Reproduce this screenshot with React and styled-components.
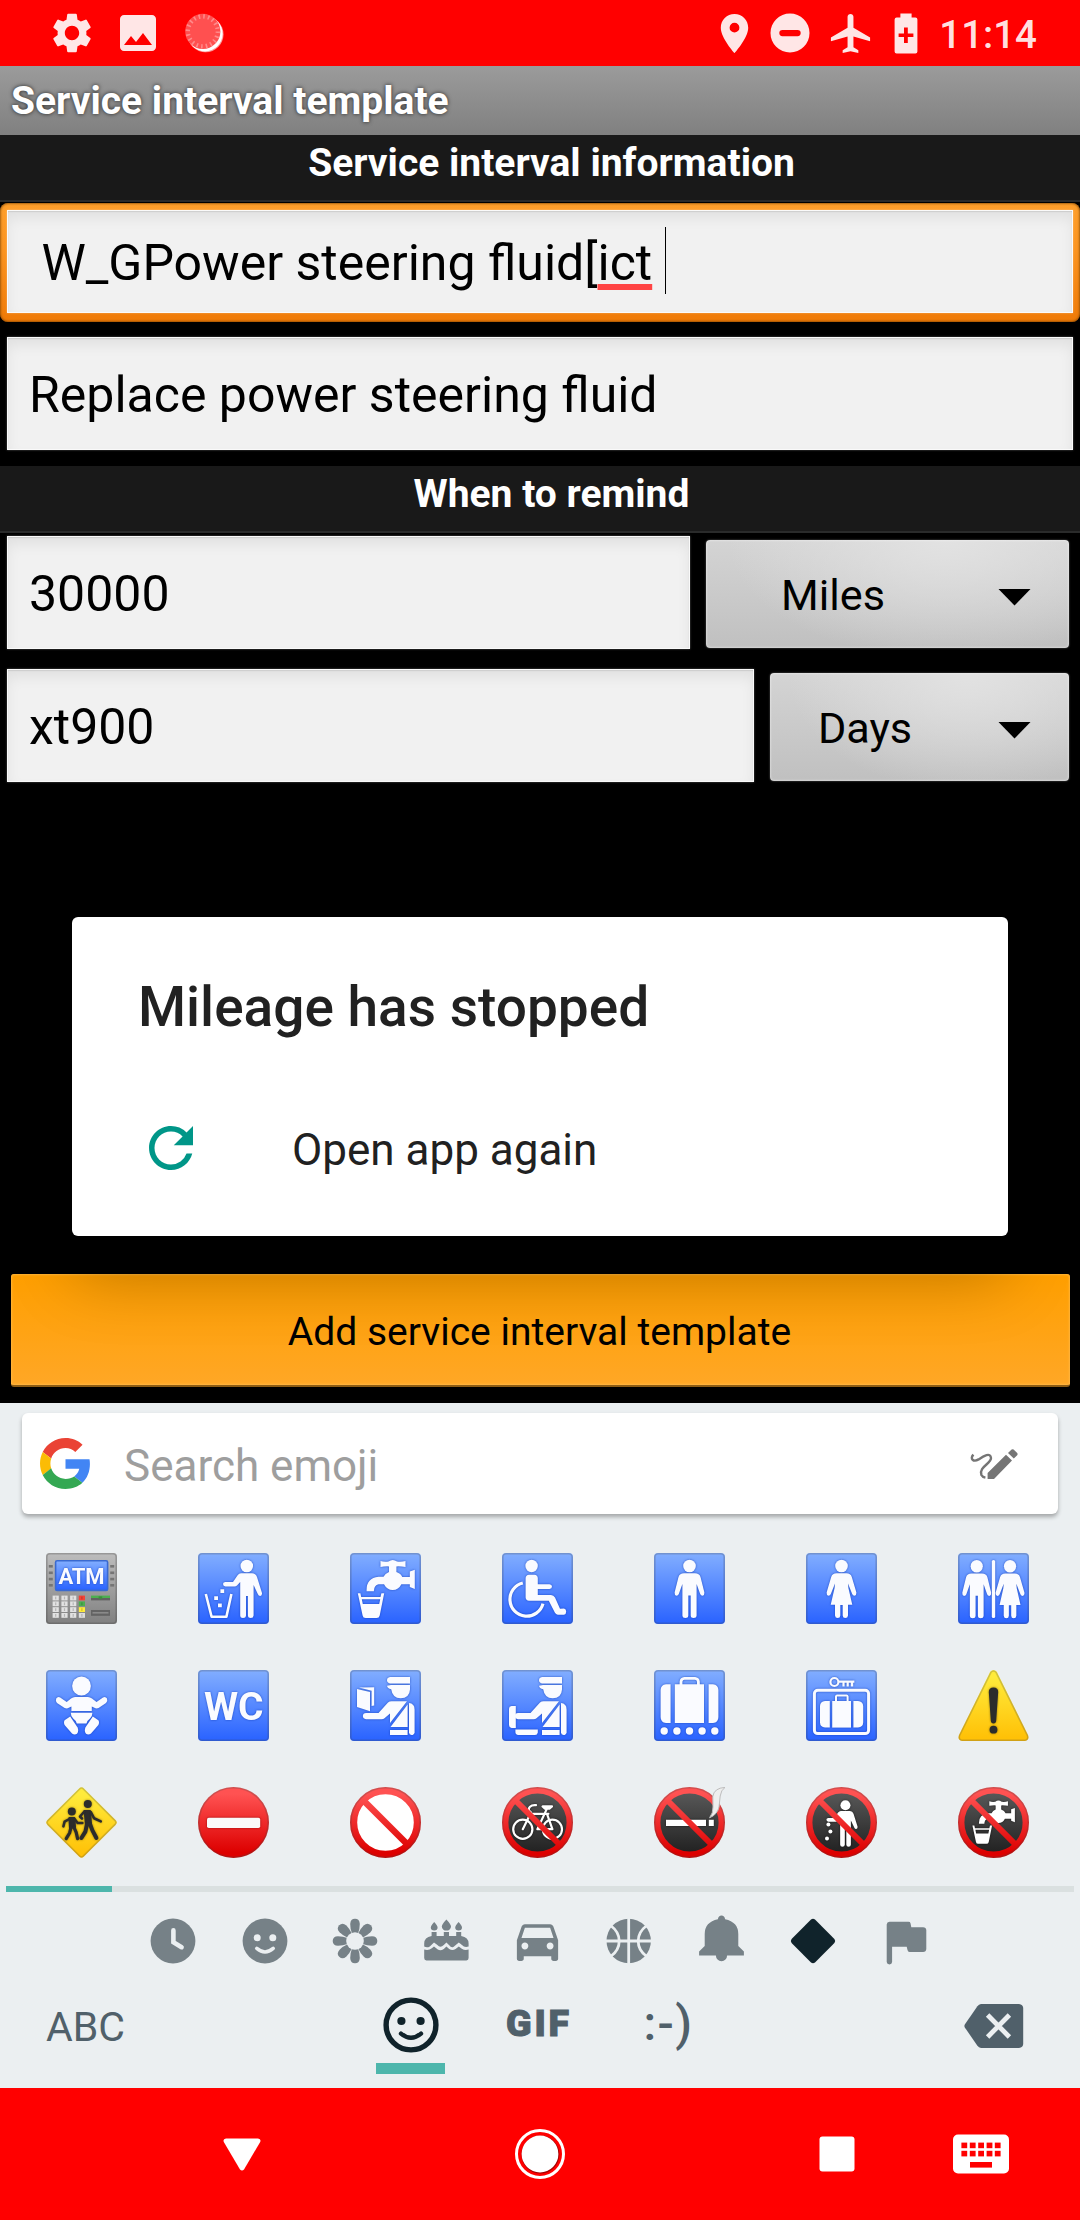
import React from 'react';
import styled, { createGlobalStyle, css } from 'styled-components';
import {
  MdSettings,
  MdImage,
  MdLocationOn,
  MdAirplanemodeActive,
  MdRefresh,
  MdDirectionsCar,
} from 'react-icons/md';

const GlobalStyle = createGlobalStyle`
  html, body { margin: 0; padding: 0; background: #000; }
  *, *::before, *::after { box-sizing: border-box; }
  svg { display: block; flex: none; }
`;

/* ---------- frame ---------- */

const Phone = styled.div`
  position: relative;
  width: 1080px;
  height: 2220px;
  display: flex;
  flex-direction: column;
  overflow: hidden;
  background: #000;
  color: #000;
  font-family: Roboto, sans-serif;
`;

const StatusBar = styled.header`
  height: 66px;
  flex: none;
  display: flex;
  justify-content: space-between;
  align-items: center;
  padding: 0 43px 0 48px;
  background: #ff0000;
  color: rgba(255, 255, 255, 0.9);
`;

const StatusGroup = styled.div`
  display: flex;
  align-items: center;
  gap: 18px;
`;

const StatusIcon = styled.span`
  margin: 0 ${(p) => p.$right || 0}px 0 ${(p) => p.$left || 0}px;
`;

const Clock = styled.span`
  font-size: 38.5px;
  line-height: 46px;
  font-weight: 500;
  margin-left: 3px;
  padding-top: 3px;
`;

const TitleBar = styled.div`
  height: 69px;
  flex: none;
  display: flex;
  align-items: center;
  padding-left: 11px;
  background: linear-gradient(#9b9b9b, #808080);
  color: #fff;
  font-size: 39px;
  font-weight: 700;
  text-shadow: 0 0 4px rgba(0, 0, 0, 0.75);
`;

/* ---------- form ---------- */

const Form = styled.main`
  height: 1268px;
  flex: none;
  display: flex;
  flex-direction: column;
`;

const SectionHeader = styled.h2`
  height: 67px;
  flex: none;
  margin: ${(p) => p.$top || 0}px 0 0;
  padding: 0 0 9px 23px;
  display: flex;
  align-items: center;
  justify-content: center;
  background: #191919;
  border-bottom: 2px solid #2a2b2b;
  color: #fff;
  font-size: 39px;
  font-weight: 700;
`;

const fieldFace = css`
  background: #f1f1f1;
  box-shadow: inset 0 0 0 1px #fafafa, inset 0 8px 14px rgba(0, 0, 0, 0.07),
    inset 0 1px 2px rgba(0, 0, 0, 0.35), 0 0 2px rgba(255, 255, 255, 0.35);
`;

const Field = styled.div`
  ${fieldFace}
  height: 113px;
  flex: none;
  width: ${(p) => p.$width}px;
  display: flex;
  align-items: center;
  padding: 3px 0 0 22px;
  font-size: 50px;
  line-height: 58px;
  white-space: pre;
`;

const FocusRing = styled.div`
  height: 119px;
  margin-top: 1px;
  flex: none;
  padding: 7px 7px 9px;
  border-radius: 8px;
  background: linear-gradient(#fe9f2b, #fb9420 40%, #ef7a07);
  box-shadow: inset 0 0 2px 1px rgba(110, 60, 0, 0.6);
`;

const FocusedField = styled(Field)`
  width: 100%;
  height: 100%;
  padding-top: 3px;
`;

const Typo = styled.span`
  text-decoration: underline #ff4444 5.5px;
  text-decoration-skip-ink: none;
  text-underline-offset: 3.5px;
`;

const Caret = styled.i`
  width: 1px;
  height: 67px;
  margin-top: -5px;
  background: #000;
`;

const FormRow = styled.div`
  display: flex;
  flex: none;
  margin-top: ${(p) => p.$top}px;
  padding: 0 11px 0 7px;
  justify-content: space-between;
  align-items: flex-end;
`;

const Stack = styled.div`
  flex: none;
  padding: 0 7px;
  margin-top: 15px;
`;

const Spinner = styled.div`
  width: ${(p) => p.$width}px;
  height: 108px;
  margin-bottom: 1px;
  display: flex;
  align-items: center;
  border-radius: 4px;
  background: radial-gradient(ellipse 60% 110% at 66% 0, #e2e2e2, rgba(226, 226, 226, 0)),
    linear-gradient(#d4d4d4, #c0c0c0);
  box-shadow: inset 0 0 2px 1px rgba(255, 255, 255, 0.35), 0 0 2px rgba(255, 255, 255, 0.4);
`;

const SpinnerLabel = styled.span`
  flex: 1;
  padding-top: 3px;
  text-align: center;
  font-size: 43.2px;
  line-height: 52px;
`;

const Arrow = styled.i`
  width: 33px;
  height: 17px;
  margin: 6px 38px 0 38px;
  background: #000;
  clip-path: polygon(0 0, 100% 0, 50% 100%);
`;

const SubmitButton = styled.button`
  height: 113px;
  flex: none;
  margin: auto 10px 16px 11px;
  padding: 5px 2px 0 0;
  border: 0;
  border-radius: 3px;
  border-bottom: 2px solid #8c5c14;
  background: linear-gradient(#ff9f00, #ffa726);
  box-shadow: inset 0 0 2px 1px rgba(255, 190, 80, 0.7);
  color: #000;
  font: 400 39px/46px Roboto, sans-serif;
`;

/* ---------- crash dialog ---------- */

const Dialog = styled.section`
  position: absolute;
  left: 72px;
  top: 917px;
  width: 936px;
  height: 319px;
  padding: 58px 66px 0;
  border-radius: 6px;
  background: #fff;
  box-shadow: 0 42px 66px -2px rgba(0, 0, 0, 0.26);
  color: #212121;
`;

const DialogTitle = styled.h1`
  margin: 0;
  font-size: 55px;
  line-height: 64px;
  font-weight: 500;
`;

const DialogAction = styled.div`
  display: flex;
  align-items: center;
  margin-top: 76px;
  gap: 88px;
  font-size: 44px;
  line-height: 52px;
  svg { color: #009688; }
  span { padding-top: 4px; }
`;

/* ---------- keyboard ---------- */

const Keyboard = styled.section`
  height: 685px;
  flex: none;
  display: flex;
  flex-direction: column;
  background: #ebeff1;
`;

const SearchCard = styled.div`
  height: 101px;
  flex: none;
  margin: 10px 22px 0;
  padding: 0 40px 0 18px;
  display: flex;
  align-items: center;
  border-radius: 6px;
  background: #fff;
  box-shadow: 0 3px 4px rgba(0, 0, 0, 0.3);
  color: #9e9e9e;
  font-size: 44px;
  span { flex: 1; padding: 5px 0 0 33px; }
`;

const EmojiGrid = styled.div`
  display: grid;
  grid-template-columns: repeat(7, 152px);
  grid-auto-rows: 117px;
  place-items: center;
  margin: 16px 0 0 5.5px;
`;

const Scroll = styled.div`
  height: 6px;
  flex: none;
  margin: 5px 6px 0;
  background: #dae0e0;
`;

const ScrollThumb = styled.div`
  width: 106px;
  height: 6px;
  background: #4db6ac;
`;

const Categories = styled.div`
  display: flex;
  flex: none;
  height: 54px;
  margin: 22px 0 0 127.8px;
`;

const Category = styled.div`
  width: 91.4px;
  display: flex;
  justify-content: center;
  align-items: center;
  color: ${(p) => (p.$active ? '#10232b' : '#768187')};
  transform: translate(${(p) => p.$nudge || 0}px, ${(p) => p.$lift || 0}px);
`;

const ModeRow = styled.div`
  display: flex;
  flex: none;
  height: 77px;
  margin-top: 29px;
  padding: 0 56px 0 46px;
  color: #50606a;
`;

const AbcKey = styled.div`
  width: 330px;
  padding-top: 6px;
  font-size: 41px;
  line-height: 48px;
`;

const ModeTab = styled.div`
  width: 69px;
  margin-right: ${(p) => p.$gap || 0}px;
  display: flex;
  flex-direction: column;
  align-items: center;
  justify-content: space-between;
  color: ${(p) => (p.$active ? '#10232b' : 'inherit')};
`;

const TabBar = styled.i`
  width: 69px;
  height: 11px;
  background: #4db6ac;
`;

const GifLabel = styled.b`
  font-size: 37.5px;
  line-height: 44px;
  font-weight: 900;
  letter-spacing: 2.8px;
  padding: 4px 0 0 3px;
  -webkit-text-stroke: 1px currentColor;
`;

const SmileLabel = styled.span`
  font-size: 48px;
  line-height: 54px;
  font-weight: 500;
  letter-spacing: 1.4px;
  padding-left: 6px;
`;

const DeleteKey = styled.div`
  margin-left: auto;
  padding-top: 5.5px;
`;

/* ---------- navigation ---------- */

const NavBar = styled.nav`
  height: 132px;
  flex: none;
  display: grid;
  grid-template-columns: 484px 112px 483px 1px;
  align-items: center;
  background: #ff0000;
`;

const NavItem = styled.div`
  display: flex;
  align-items: center;
  justify-content: ${(p) => p.$align || 'center'};
  gap: 98px;
  padding-right: ${(p) => p.$right || 0}px;
  color: #fff;
`;

/* ---------- pictograms ---------- */

const WHITE = '#fafbff';

const Pictogram = styled.g`
  filter: drop-shadow(0 0 1px ${(p) => p.$glow || 'rgba(10, 50, 170, 0.7)'});
`;

const TileText = styled.text`
  font-family: Roboto, sans-serif;
  font-weight: 700;
  font-size: ${(p) => p.$size}px;
  fill: ${WHITE};
  text-anchor: middle;
`;

const HiddenDefs = styled.svg`
  position: absolute;
`;

const Defs = () => (
  <HiddenDefs width="0" height="0">
    <defs>
      <linearGradient id="blue" x1="0" y1="0" x2="0" y2="1">
        <stop offset="0" stopColor="#82aeff" />
        <stop offset="1" stopColor="#2962ff" />
      </linearGradient>
      <linearGradient id="red" x1="0" y1="0" x2="0" y2="71" gradientUnits="userSpaceOnUse">
        <stop offset="0.1" stopColor="#ff5252" />
        <stop offset="0.92" stopColor="#dd0000" />
      </linearGradient>
      <linearGradient id="yellow" x1="0" y1="0" x2="0" y2="1">
        <stop offset="0.1" stopColor="#ffeb3b" />
        <stop offset="0.95" stopColor="#ffc107" />
      </linearGradient>
      <linearGradient id="dark" x1="0" y1="0" x2="0" y2="1">
        <stop offset="0" stopColor="#5a5a5a" />
        <stop offset="1" stopColor="#202020" />
      </linearGradient>
      <linearGradient id="grey" x1="0" y1="0" x2="0" y2="1">
        <stop offset="0" stopColor="#bdbdbd" />
        <stop offset="1" stopColor="#808080" />
      </linearGradient>
    </defs>
  </HiddenDefs>
);

const Emoji = ({ children }) => (
  <svg width="71" height="71" viewBox="0 0 71 71">{children}</svg>
);

const BlueTile = ({ children }) => (
  <Emoji>
    <rect width="71" height="71" rx="4" fill="url(#blue)" />
    <rect x="0.8" y="0.8" width="69.4" height="69.4" rx="3.4" fill="none" stroke="#424242" strokeOpacity="0.25" strokeWidth="1.6" />
    <Pictogram fill={WHITE}>{children}</Pictogram>
  </Emoji>
);

const Banned = ({ children, over }) => (
  <Emoji>
    <circle cx="35.5" cy="35.5" r="32" fill="url(#dark)" />
    <Pictogram fill="#fff" $glow="rgba(0, 0, 0, 0.6)">{children}</Pictogram>
    <circle cx="35.5" cy="35.5" r="32.3" fill="none" stroke="url(#red)" strokeWidth="6.4" />
    <path d="M13.5 13.5L57.5 57.5" stroke="url(#red)" strokeWidth="6" />
    <circle cx="35.5" cy="35.5" r="34.8" fill="none" stroke="#424242" strokeOpacity="0.25" strokeWidth="1.4" />
    {over}
  </Emoji>
);

const Man = () => (
  <>
    <circle cx="35.5" cy="13" r="6.3" />
    <path d="M30 20.3H41Q45.3 20.3 46.5 24L50.4 39.6Q50.6 42.4 48.6 42.8Q46.8 42.8 46.2 41L42.6 31V62.5Q42.4 65 39.6 65Q36.8 65 36.7 62.5V42.5H34.3V62.5Q34.2 65 31.4 65Q28.6 65 28.4 62.5V31L24.8 41Q24.2 42.8 22.4 42.8Q20.4 42.4 20.6 39.6L24.5 24Q25.7 20.3 30 20.3Z" />
  </>
);

const Woman = () => (
  <>
    <circle cx="35.5" cy="13" r="6.3" />
    <path d="M30.5 20.3H40.5Q44.6 20.3 45.8 24L50.4 39.6Q50.6 42.4 48.6 42.8Q46.8 42.8 46.2 41L42 30.5L42.4 35L46.3 51.8H42V62.5Q41.8 65 39.3 65Q36.8 65 36.7 62.5V52H34.3V62.5Q34.2 65 31.7 65Q29.2 65 29 62.5V51.8H24.7L28.6 35L29 30.5L24.8 41Q24.2 42.8 22.4 42.8Q20.4 42.4 20.6 39.6L25.2 24Q26.4 20.3 30.5 20.3Z" />
  </>
);

const Thrower = () => (
  <>
    <circle cx="48.8" cy="13" r="6.3" />
    <path d="M43 20.3H54Q57.6 20.3 59 24L64 40Q64.2 42.6 62.3 42.9Q60.6 43 59.8 41L55.6 32V62.5Q55.4 65 52.8 65Q50 65 49.9 62.5V43H48V62.5Q47.8 65 45 65Q42.3 65 42.2 62.5V29L39 32.6Q38 33.6 36.5 33.6H27.5Q25 33.2 25 31Q25 29.2 27.5 29H35L39.6 22.2Q41 20.5 43 20.3Z" />
  </>
);

const Tap = () => (
  <>
    <path d="M30.5 8Q34 9.2 38.5 8.6Q42.7 5.4 47 8.6Q51.5 9.2 55.5 8V14Q51 13.2 46.4 13.4V19Q51 20.5 52.3 24H59.8V18.5L64.8 16.8V36L59.8 34V31.2H51.4Q48.5 37 42.7 37Q37 37 34 31.2H28.6Q24 32 23.8 38.2H16.6Q16 25 28.5 23.8H33.5Q35 20.5 39 19V13.4Q34.5 13.2 30.5 14Z" />
    <path d="M7.8 40.3L12.6 62.4Q13 65 15.6 65H26.6Q29.2 65 29.7 62.4L34.2 40.3H31.4L30.5 44H11.2L10.4 40.3ZM11.8 46.2H30.2L29.2 51H12.8Z" fillRule="evenodd" />
  </>
);

const Officer = () => (
  <>
    <path d="M40 7H60V13.6H40Q37 12.8 37 10.3Q37 7.6 40 7Z" />
    <path d="M41 15H60V19.5Q59.5 28.2 50.6 28.2Q42.5 28.2 41.2 19.2Q37.4 18.8 37 15.8Z" />
    <path d="M41.5 31.3H57L40 53V43.5L34.5 48.2Q33.5 49.2 31.5 49.2H16Q13 48.8 12.8 46Q13 43.2 16 43H28.5L38 32.6Q39.5 31.3 41.5 31.3Z" />
    <path d="M57.6 34.5V57H40.5Z" />
    <path d="M40 60H57.6V65H40Z" />
    <path d="M59 33Q64.6 33.5 64.6 39.5V62.2Q64.2 65 61.5 65Q59 64.8 59 62.2Z" />
  </>
);

const Atm = () => (
  <Emoji>
    <rect width="71" height="71" rx="3.5" fill="url(#grey)" />
    <rect x="0.8" y="0.8" width="69.4" height="69.4" rx="3" fill="none" stroke="#424242" strokeOpacity="0.3" strokeWidth="1.6" />
    <rect x="9.6" y="7.8" width="52" height="29.6" rx="1.5" fill="url(#blue)" stroke="#3a6ad0" strokeWidth="1.6" />
    <Pictogram>
      <TileText x="35.5" y="31" $size="22" textLength="46">ATM</TileText>
    </Pictogram>
    {[12, 18.5, 24.8, 31].map((y) => (
      <g key={y} fill="#757575">
        <rect x="2.8" y={y} width="4" height="2.6" />
        <rect x="64.2" y={y} width="4" height="2.6" />
      </g>
    ))}
    {[42.6, 48.4, 54.2, 60].map((y, r) =>
      [6.6, 15.4, 24.1, 32.8].map((x, c) => {
        const hue = ['#f44336', '#4caf50', '#ffeb3b', '#dcdcdc'][r];
        return (
          <g key={`${x}-${y}`}>
            <rect x={x} y={y} width="6.2" height="4.8" fill={c === 3 ? hue : '#e2e2e2'} />
            <rect x={x + 2.5} y={y + 1} width="1.2" height="2.8" fill="#000" opacity="0.2" />
          </g>
        );
      })
    )}
    <rect x="45" y="42.6" width="19" height="2.4" fill="#4caf50" />
    <rect x="45" y="45" width="19" height="2.4" fill="#616161" />
    <rect x="52.6" y="43.4" width="3.6" height="2.6" fill="#3c8c40" />
    <rect x="45" y="57" width="19" height="5.8" fill="#636363" />
    <rect x="46.5" y="59" width="16" height="1.6" fill="#8a8a8a" />
  </Emoji>
);

const Litter = () => (
  <BlueTile>
    <Thrower />
    <path d="M7.8 41L13.6 63.8H28.4L33.4 41" fill="none" stroke={WHITE} strokeWidth="2.6" strokeLinejoin="round" />
    <path d="M22.4 36.2h3.8v3.8h-3.8zM16.2 43.2h3.8v3.8h-3.8zM20 50.4h3.8v3.8H20z" />
  </BlueTile>
);

const Wheelchair = () => (
  <BlueTile>
    <circle cx="29.6" cy="13" r="6.2" />
    <path d="M27 21.8H32.4Q35.6 22 35.8 25V31.2H47.5Q50 31.4 50 33.6Q50 35.8 47.5 36H35.8V42H49Q51.6 42 53 44.5L58 55.8L62 55.6Q64.2 56 64.2 58.6Q64.2 61.4 62 61.8H55.8Q53.8 61.6 52.8 59.6L46.8 47.8H27Q23.8 47.6 23.6 44.6V25Q23.8 22 27 21.8Z" />
    <path d="M20.8 30A16.8 16.8 0 1 0 41 50.6" fill="none" stroke={WHITE} strokeWidth="3.2" />
  </BlueTile>
);

const Restroom = () => (
  <BlueTile>
    <g transform="translate(-15.7 0.2) scale(0.97 1)"><Man /></g>
    <rect x="33.8" y="7" width="3.4" height="58" rx="1.6" />
    <g transform="translate(17.6 0.2) scale(0.97 1)"><Woman /></g>
  </BlueTile>
);

const Baby = () => (
  <BlueTile>
    <circle cx="35.5" cy="16" r="9.4" />
    <path d="M29 27H42Q44 27 46 28.6L50.5 32L57 27.4Q59.8 26.4 61 28.6Q62 31 60 33L52.6 38Q50.4 39 48.4 37.8L45.8 36.4V41H25.4V36.4L22.8 37.8Q20.8 39 18.6 38L11 33Q9.2 31 10.2 28.6Q11.4 26.4 14.2 27.4L20.7 32L25 28.6Q27 27 29 27Z" />
    <path d="M24.8 42.8H46.4Q46.4 46.6 44 48.6Q41.4 50.4 40.4 53.6H30.8Q29.8 50.4 27.2 48.6Q24.8 46.6 24.8 42.8Z" />
    <path d="M24.2 46.6L31.6 57.6Q33 61.6 31 63.8Q28.6 65.2 26 63.6L18.6 55Q17.4 52.4 18.6 50.2Z" />
    <path d="M46.8 46.6L39.4 57.6Q38 61.6 40 63.8Q42.4 65.2 45 63.6L52.4 55Q53.6 52.4 52.4 50.2Z" />
  </BlueTile>
);

const Wc = () => (
  <BlueTile>
    <TileText x="35.8" y="49.8" $size="39" textLength="59.5">WC</TileText>
  </BlueTile>
);

const Passport = () => (
  <BlueTile>
    <Officer />
    <path d="M7 19L20 22V41.2L7 37Z" />
    <path d="M9 17.6L24.2 17.2V35.4L21.6 36V20.8Z" />
  </BlueTile>
);

const Customs = () => (
  <BlueTile>
    <Officer />
    <path d="M9.5 36H13.8V58H9.5Q7 57.6 7 55V38.6Q7 36.4 9.5 36Z" />
    <path d="M13.4 59.4H35.8V62.4Q35.4 65 33 65H16.2Q13.4 64.6 13.4 62Z" />
  </BlueTile>
);

const BaggageClaim = () => (
  <BlueTile>
    <path d="M20.8 14.2H50V53H20.8Z" />
    <path d="M27 15V11.6Q27.4 8.6 30.4 8.4H41Q44 8.6 44.4 11.6V15" fill="none" stroke={WHITE} strokeWidth="2.8" />
    <path d="M16.6 14.2V53H12Q6.6 52.4 6.6 47V20Q6.8 14.6 12 14.2ZM54.6 14.2V53H59Q64.4 52.4 64.4 47V20Q64.2 14.6 59 14.2Z" />
    {[10.2, 22.9, 35.5, 48.1, 60.8].map((x) => <circle key={x} cx={x} cy="61" r="3.7" />)}
  </BlueTile>
);

const Locker = () => (
  <BlueTile>
    <rect x="8.4" y="20.2" width="54.2" height="43.4" rx="3.4" fill="none" stroke={WHITE} strokeWidth="3" />
    <path d="M26.2 31H45V57.6H26.2Z" />
    <path d="M30 31V26.4Q30.2 25.6 31 25.6H40.6Q41.4 25.6 41.6 26.4V31" fill="none" stroke={WHITE} strokeWidth="2" />
    <path d="M23.8 31V57.6H19Q14.2 57.2 14 52.6V36Q14.2 31.4 19 31ZM47.4 31V57.6H52Q57 57.2 57.2 52.6V36Q57 31.4 52 31Z" />
    <circle cx="28.4" cy="12" r="4" fill="none" stroke={WHITE} strokeWidth="2.2" />
    <path d="M32 10.6H48.4V12.8H47.2V16.4H44.8V12.8H42.8V16.4H40.6V12.8H38.6V16.4H36.4V12.8H32Z" />
  </BlueTile>
);

const Warning = () => (
  <Emoji>
    <path d="M32.2 1.8Q35.5 -1.6 38.8 1.8L70 65Q71.8 70.4 67 71H4Q-0.8 70.4 1 65Z" fill="url(#yellow)" />
    <path d="M32.8 2.6Q35.5 -0.4 38.2 2.6L69.4 65.4Q70.6 69.8 66.8 70.2H4.2Q0.4 69.8 1.6 65.4Z" fill="none" stroke="#424242" strokeOpacity="0.25" strokeWidth="1.5" />
    <Pictogram fill="#2c2c2c" $glow="rgba(80, 60, 0, 0.6)">
      <path d="M30.8 22Q30.8 17.4 35.5 17.4Q40.2 17.4 40.2 22L38.2 50.6Q38 53.6 35.5 53.6Q33 53.6 32.8 50.6Z" />
      <circle cx="35.5" cy="59.7" r="3.9" />
    </Pictogram>
  </Emoji>
);

const Children = () => (
  <Emoji>
    <path d="M33 1.4Q35.5 -1 38 1.4L69.6 33Q72 35.5 69.6 38L38 69.6Q35.5 72 33 69.6L1.4 38Q-1 35.5 1.4 33Z" fill="url(#yellow)" />
    <path d="M33.4 2.2Q35.5 0 37.6 2.2L68.8 33.4Q71 35.5 68.8 37.6L37.6 68.8Q35.5 71 33.4 68.8L2.2 37.6Q0 35.5 2.2 33.4Z" fill="none" stroke="#424242" strokeOpacity="0.25" strokeWidth="1.5" />
    <Pictogram fill="#2c2c2c" stroke="#2c2c2c" strokeLinecap="round" strokeLinejoin="round" $glow="rgba(80, 60, 0, 0.6)">
      <circle cx="41.8" cy="17" r="4" stroke="none" />
      <circle cx="25.8" cy="24.6" r="4" stroke="none" />
      <path d="M38.6 24H44L45 37L40 38Z" strokeWidth="2" />
      <path d="M38.4 24.5L34 29.5L36 31.5M44.8 25L48 31.2L54.8 34.4" fill="none" strokeWidth="2.6" />
      <path d="M41 37L39.4 44.6L35.4 51M44 37L46.4 43.4L50.4 51" fill="none" strokeWidth="4" />
      <path d="M23.4 31H28.4L29 40L24 41Z" strokeWidth="2" />
      <path d="M23.4 32L18.6 34.6L17.4 39.4M29 32.4L31.6 36L36.4 36" fill="none" strokeWidth="2.5" />
      <path d="M25 40.4L23.6 46L20.2 51.6M28 40.4L30.2 45.4L31.6 51.6" fill="none" strokeWidth="3.2" />
    </Pictogram>
  </Emoji>
);

const NoEntry = () => (
  <Emoji>
    <circle cx="35.5" cy="35.5" r="35.5" fill="url(#red)" />
    <circle cx="35.5" cy="35.5" r="34.7" fill="none" stroke="#424242" strokeOpacity="0.25" strokeWidth="1.6" />
    <Pictogram fill="#fafafa" $glow="rgba(120, 0, 0, 0.7)">
      <rect x="9" y="30.8" width="53.2" height="10.2" rx="1.8" />
    </Pictogram>
  </Emoji>
);

const Prohibited = () => (
  <Emoji>
    <circle cx="35.5" cy="35.5" r="31" fill="#fff" />
    <circle cx="35.5" cy="35.5" r="31.9" fill="none" stroke="url(#red)" strokeWidth="7.2" />
    <path d="M14 14L57 57" stroke="url(#red)" strokeWidth="6.6" />
    <circle cx="35.5" cy="35.5" r="34.7" fill="none" stroke="#424242" strokeOpacity="0.25" strokeWidth="1.6" />
  </Emoji>
);

const NoBikes = () => (
  <Banned>
    <g fill="none" stroke="#fff" strokeWidth="2.2" strokeLinecap="round" strokeLinejoin="round">
      <circle cx="20.8" cy="42.2" r="9.6" />
      <circle cx="50.4" cy="42.2" r="9.6" />
      <path d="M20.8 42.2L29 25.4Q25.2 22.8 28 19.8Q30 17.8 34 18.2M29 26.8H46.4M45.4 20.6L35.4 42.2H50.4L45 26.8M40.6 19.4H50L47.4 21.6H43Z" />
    </g>
  </Banned>
);

const NoSmoking = () => (
  <Banned
    over={
      <path d="M71 0.4Q67 3 66.2 9L65 20Q63.6 27.4 55.6 30.8Q59.2 26 59 20L58.8 9.6Q60 1 71 0.4Z" fill="#eeeeee" stroke="#bdbdbd" strokeWidth="1" />
    }
  >
    <path d="M12 32.8H52V39H12ZM54.8 32.8H59.8V39H54.8Z" />
  </Banned>
);

const NoLittering = () => (
  <Banned>
    <g transform="translate(0.4 7.8) scale(0.8)"><Thrower /></g>
    <circle cx="22.4" cy="37.6" r="2" />
    <circle cx="24.4" cy="44.6" r="2" />
    <circle cx="21" cy="51.6" r="2" />
  </Banned>
);

const NoWater = () => (
  <Banned>
    <g transform="translate(8.6 8.4) scale(0.745)"><Tap /></g>
  </Banned>
);

const EMOJI = [
  Atm,
  Litter,
  () => <BlueTile><Tap /></BlueTile>,
  Wheelchair,
  () => <BlueTile><Man /></BlueTile>,
  () => <BlueTile><Woman /></BlueTile>,
  Restroom,
  Baby,
  Wc,
  Passport,
  Customs,
  BaggageClaim,
  Locker,
  Warning,
  Children,
  NoEntry,
  Prohibited,
  NoBikes,
  NoSmoking,
  NoLittering,
  NoWater,
];

/* ---------- line icons ---------- */

const Glyph = ({ size = 54, children }) => (
  <svg width={size} height={size} viewBox="0 0 54 54" fill="currentColor">{children}</svg>
);

const CATEGORY_BG = '#ebeff1';

const RecentIcon = () => (
  <Glyph>
    <circle cx="27" cy="27" r="22.4" />
    <path d="M27.4 16.4V28.2L35.6 33.2" fill="none" stroke={CATEGORY_BG} strokeWidth="4.6" strokeLinecap="round" />
  </Glyph>
);

const FaceIcon = () => (
  <Glyph>
    <circle cx="27" cy="27" r="22.4" />
    <circle cx="19.2" cy="23.8" r="3.5" fill={CATEGORY_BG} />
    <circle cx="34.8" cy="23.8" r="3.5" fill={CATEGORY_BG} />
    <path d="M18.8 34.4Q27 41.6 35.2 34.4" fill="none" stroke={CATEGORY_BG} strokeWidth="3.6" strokeLinecap="round" />
  </Glyph>
);

const FlowerIcon = () => (
  <Glyph>
    {[0, 45, 90, 135, 180, 225, 270, 315].map((a) => (
      <path key={a} d="M24 19.5Q22.2 15 22.2 10Q22.4 4.8 27 4.7Q31.6 4.8 31.8 10Q31.8 15 30 19.5Z" transform={`rotate(${a} 27 27)`} />
    ))}
    <circle cx="27" cy="27" r="8.8" fill={CATEGORY_BG} />
  </Glyph>
);

const CakeIcon = () => (
  <Glyph>
    <path d="M27 5.6Q31.6 10.4 31.6 12.6A4.6 4 0 0 1 22.4 12.6Q22.4 10.4 27 5.6ZM14.8 8Q18.2 11.6 18.2 13.4A3.4 3 0 0 1 11.4 13.4Q11.4 11.6 14.8 8ZM39.2 8Q42.6 11.6 42.6 13.4A3.4 3 0 0 1 35.8 13.4Q35.8 11.6 39.2 8Z" />
    <path d="M12.2 18H17.2V22H24.4V18H29.6V22H36.8V18H41.8V22Q49.2 23.4 49.2 29.4V32.6Q45 34 42.6 31L39.4 28.4L34 33Q31.8 34 29.6 31L27 28.4L24.4 31Q20.8 34.4 18 31L14.6 28.4L10.4 32.4Q7.8 34 4.8 32.6V29.4Q4.8 23.4 12.2 22Z" />
    <path d="M4.8 35.6Q9.6 36.8 12.4 34.2L14.6 32.6L18.4 35.4Q21 37.2 24.4 35L27 32.6L29.8 35Q33 37.2 36.2 35L39.4 32.6L42.4 34.8Q45.4 36.8 49.2 35.6V44Q49.2 46.4 47 46.4H7Q4.8 46.4 4.8 44Z" />
  </Glyph>
);

const BallIcon = () => (
  <Glyph>
    <circle cx="27" cy="27" r="22.2" />
    <g fill="none" stroke={CATEGORY_BG} strokeWidth="2.8">
      <path d="M27 3V51M3 27H51" />
      <path d="M9.5 12Q17.5 18 17.5 27T9.5 42M44.5 12Q36.5 18 36.5 27T44.5 42" />
    </g>
  </Glyph>
);

const DiamondIcon = () => (
  <Glyph>
    <path d="M25 5.4Q27 4 29 5.4L48.4 25Q50 27 48.4 29L29 48.6Q27 50 25 48.6L5.6 29Q4 27 5.6 25Z" />
  </Glyph>
);

const BellIcon = () => (
  <Glyph>
    <path d="M27 1.6Q30 1.8 30.6 5.2Q43.8 8 43.8 20V32L49.4 37.6V41.6H32.6A5.6 5.6 0 0 1 21.4 41.6H4.6V37.6L10.2 32V20Q10.2 8 23.4 5.2Q24 1.8 27 1.6Z" />
  </Glyph>
);

const FlagIcon = () => (
  <Glyph>
    <path d="M10 7.8H29Q30.6 7.8 31 9.2L31.8 13.2H43.6Q46.6 13.4 46.8 16V35Q46.6 37.8 43.6 38H30Q28.4 37.8 28 36L27.2 32.8H12.6V48Q12.4 50.4 10 50.6Q7.4 50.4 7.2 48V10.6Q7.4 8 10 7.8Z" />
  </Glyph>
);

const OutlineFace = () => (
  <svg width="56" height="56" viewBox="0 0 56 56">
    <circle cx="28" cy="28" r="24.9" fill="none" stroke="currentColor" strokeWidth="5.4" />
    <circle cx="18.4" cy="24" r="4.1" fill="currentColor" />
    <circle cx="37.6" cy="24" r="4.1" fill="currentColor" />
    <path d="M18 36.6Q28 45 38 36.6" fill="none" stroke="currentColor" strokeWidth="4.4" strokeLinecap="round" />
  </svg>
);

const GoogleLogo = () => (
  <svg width="51" height="51" viewBox="0 0 48 48">
    <path fill="#EA4335" d="M24 9.5c3.54 0 6.71 1.22 9.21 3.6l6.85-6.85C35.9 2.38 30.47 0 24 0 14.62 0 6.51 5.38 2.56 13.22l7.98 6.19C12.43 13.72 17.74 9.5 24 9.5z" />
    <path fill="#4285F4" d="M46.98 24.55c0-1.57-.15-3.09-.38-4.55H24v9.02h12.94c-.58 2.96-2.26 5.48-4.78 7.18l7.73 6c4.51-4.18 7.09-10.36 7.09-17.65z" />
    <path fill="#FBBC05" d="M10.53 28.59c-.48-1.45-.76-2.99-.76-4.59s.27-3.14.76-4.59l-7.98-6.19C.92 16.46 0 20.12 0 24c0 3.88.92 7.54 2.56 10.78l7.97-6.19z" />
    <path fill="#34A853" d="M24 48c6.48 0 11.93-2.13 15.89-5.81l-7.73-6c-2.15 1.45-4.92 2.3-8.16 2.3-6.26 0-11.57-4.22-13.47-9.91l-7.98 6.19C6.51 42.62 14.62 48 24 48z" />
  </svg>
);

const HandwritingIcon = () => (
  <svg width="48" height="32" viewBox="0 0 48 32">
    <path d="M3.4 6.6C-0.6 11 3.6 14.4 8.6 11.4C13.6 8 20.6 4 21 10C21.4 15.6 8.4 19 11.4 27Q12.4 29 15.4 29.6" fill="none" stroke="#757575" strokeWidth="2.4" />
    <path d="M17.6 31V25L36 6.8L42 12.4L24 31ZM38 5L41.6 1.6Q42.6 0.8 43.6 1.6L47.2 5Q48 6.2 47.2 7.2L43.8 10.6Z" fill="#757575" />
  </svg>
);

const SpinnerDisc = () => (
  <svg width="40" height="40" viewBox="0 0 40 40">
    <circle cx="21.6" cy="21.4" r="17.9" fill="#ff9a9a" />
    <circle cx="21" cy="20.8" r="17.6" fill="#fff" />
    <circle cx="18.8" cy="18.4" r="17.6" fill="#ff5050" />
    <circle cx="18.8" cy="18.4" r="15" fill="none" stroke="#ff8a8a" strokeWidth="4.4" strokeDasharray="1.6 3.11" />
  </svg>
);

const DndIcon = () => (
  <svg width="40" height="40" viewBox="0 0 40 40">
    <path fillRule="evenodd" fill="currentColor" d="M20 0.5A19.5 19.5 0 1 1 20 39.5A19.5 19.5 0 1 1 20 0.5ZM12.4 17A3 3 0 0 0 12.4 23.2H27.6A3 3 0 0 0 27.6 17Z" />
  </svg>
);

const BatteryIcon = () => (
  <svg width="24" height="41" viewBox="0 0 24 41">
    <path fillRule="evenodd" fill="currentColor" d="M6.4 0.6H17.6V4.4H21.4Q23.4 4.6 23.4 6.4V38.6Q23.4 40.6 21.4 40.6H2.6Q0.6 40.6 0.6 38.6V6.4Q0.8 4.6 2.6 4.4H6.4ZM10 14.6V20.6H4.6V24H10V30H13.8V24H19.4V20.6H13.8V14.6Z" />
  </svg>
);

const BackIcon = () => (
  <svg width="38" height="33" viewBox="0 0 38 33">
    <path d="M3 0.4H35Q38.4 1 37.2 4L21 31.4Q19 33.6 17 31.4L0.8 4Q-0.4 1 3 0.4Z" fill="#fff" />
  </svg>
);

const HomeIcon = () => (
  <svg width="52" height="52" viewBox="0 0 52 52">
    <circle cx="26" cy="26" r="23.5" fill="none" stroke="#fff" strokeWidth="3" />
    <circle cx="26.4" cy="26.6" r="19" fill="#7a0000" opacity="0.7" />
    <circle cx="26" cy="26" r="18.4" fill="#fff" />
  </svg>
);

const RecentsIcon = () => (
  <svg width="36" height="36" viewBox="0 0 36 36">
    <rect x="0.5" y="0.5" width="35" height="35" rx="3" fill="#fff" />
  </svg>
);

const KeyboardIcon = () => (
  <svg width="56" height="40" viewBox="0 0 56 40">
    <rect width="56" height="39" y="0.5" rx="5" fill="#fff" />
    <g fill="#ff0000">
      {[8.4, 16.8, 25.2, 33.6, 41.8].map((x) => (
        <g key={x}>
          <rect x={x} y="8.6" width="5.8" height="5.6" />
          <rect x={x} y="16.8" width="5.8" height="5.6" />
        </g>
      ))}
      <rect x="17" y="28" width="22" height="5.6" />
    </g>
  </svg>
);

const DeleteIcon = () => (
  <svg width="60" height="46" viewBox="0 0 60 46">
    <path d="M17 1H55Q59 1.4 59.2 5V41Q59 44.6 55 45H17Q14.8 44.8 13.4 42.8L0.8 24.4Q0 23 0.8 21.6L13.4 3.2Q14.8 1.2 17 1Z" fill="currentColor" />
    <path d="M23.6 12L45.4 34M45.4 12L23.6 34" stroke={CATEGORY_BG} strokeWidth="4.8" />
  </svg>
);

const CATEGORIES = [
  { name: 'recent', icon: <RecentIcon /> },
  { name: 'people', icon: <FaceIcon /> },
  { name: 'nature', icon: <FlowerIcon />, nudge: -1 },
  { name: 'food', icon: <CakeIcon />, nudge: -1.6 },
  { name: 'travel', icon: <MdDirectionsCar size={55} />, nudge: -2, lift: -1.2 },
  { name: 'sport', icon: <BallIcon />, nudge: -1.3 },
  { name: 'objects', icon: <BellIcon />, nudge: -0.5 },
  { name: 'symbols', icon: <DiamondIcon />, active: true },
  { name: 'flags', icon: <FlagIcon />, nudge: 1.5 },
];

export default function App() {
  return (
    <Phone>
      <GlobalStyle />
      <Defs />
      <StatusBar>
        <StatusGroup>
          <MdSettings size={48} />
          <MdImage size={48} />
          <StatusIcon $left={4}><SpinnerDisc /></StatusIcon>
        </StatusGroup>
        <StatusGroup>
          <StatusIcon $right={-6}><MdLocationOn size={47} /></StatusIcon>
          <StatusIcon $right={-1}><DndIcon /></StatusIcon>
          <StatusIcon $right={2}><MdAirplanemodeActive size={47} /></StatusIcon>
          <BatteryIcon />
          <Clock>11:14</Clock>
        </StatusGroup>
      </StatusBar>

      <TitleBar>Service interval template</TitleBar>

      <Form>
        <SectionHeader>Service interval information</SectionHeader>
        <FocusRing>
          <FocusedField>
            <span> W_GPower steering fluid[<Typo>ict</Typo> </span>
            <Caret />
          </FocusedField>
        </FocusRing>
        <Stack>
          <Field $width={1066}>Replace power steering fluid</Field>
        </Stack>
        <SectionHeader $top={16}>When to remind</SectionHeader>
        <FormRow $top={3}>
          <Field $width={683}>30000</Field>
          <Spinner $width={363}>
            <SpinnerLabel>Miles</SpinnerLabel>
            <Arrow />
          </Spinner>
        </FormRow>
        <FormRow $top={20}>
          <Field $width={747}>xt900</Field>
          <Spinner $width={299}>
            <SpinnerLabel>Days</SpinnerLabel>
            <Arrow />
          </Spinner>
        </FormRow>
        <SubmitButton>Add service interval template</SubmitButton>
      </Form>

      <Keyboard>
        <SearchCard>
          <GoogleLogo />
          <span>Search emoji</span>
          <HandwritingIcon />
        </SearchCard>
        <EmojiGrid>
          {EMOJI.map((Item, i) => <Item key={i} />)}
        </EmojiGrid>
        <Scroll><ScrollThumb /></Scroll>
        <Categories>
          {CATEGORIES.map((c) => (
            <Category key={c.name} $active={c.active} $nudge={c.nudge} $lift={c.lift}>
              {c.icon}
            </Category>
          ))}
        </Categories>
        <ModeRow>
          <AbcKey>ABC</AbcKey>
          <ModeTab $active $gap={58}>
            <OutlineFace />
            <TabBar />
          </ModeTab>
          <ModeTab $gap={59}>
            <GifLabel>GIF</GifLabel>
          </ModeTab>
          <ModeTab>
            <SmileLabel>:-)</SmileLabel>
          </ModeTab>
          <DeleteKey><DeleteIcon /></DeleteKey>
        </ModeRow>
      </Keyboard>

      <NavBar>
        <NavItem><BackIcon /></NavItem>
        <NavItem><HomeIcon /></NavItem>
        <NavItem $align="flex-end" $right={70}>
          <RecentsIcon />
          <KeyboardIcon />
        </NavItem>
      </NavBar>

      <Dialog>
        <DialogTitle>Mileage has stopped</DialogTitle>
        <DialogAction>
          <MdRefresh size={66} />
          <span>Open app again</span>
        </DialogAction>
      </Dialog>
    </Phone>
  );
}
